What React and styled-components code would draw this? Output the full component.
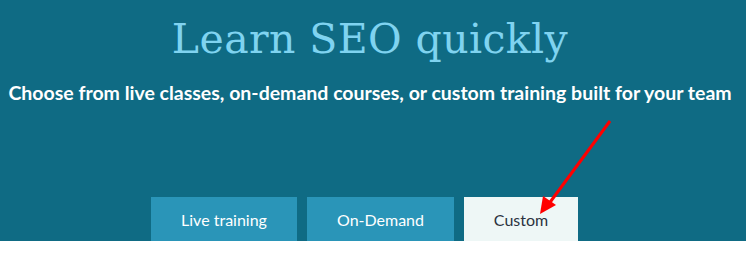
import React from "react";
import styled, { createGlobalStyle } from "styled-components";

const Global = createGlobalStyle`
  body {
    margin: 0;
    background: #ffffff;
  }
`;

const Banner = styled.section`
    position: relative;
    background: #0f6b84;
    height: 241px;
    padding-right: 6px;
    display: flex;
    flex-direction: column;
    align-items: center;
  `,
  Title = styled.h1`
    margin: 10px 0 0;
    font-family: "DejaVu Serif", "Liberation Serif", serif;
    font-weight: 200;
    font-size: 41px;
    line-height: 58px;
    color: #7fd3f0;
    letter-spacing: 0.4px;
  `,
  Subtitle = styled.p`
    margin: 13px 0 0;
    font-family: Lato, "Liberation Sans", sans-serif;
    font-weight: 700;
    font-size: 19.5px;
    line-height: 24px;
    color: #ffffff;
  `,
  Tabs = styled.nav`
    margin-top: auto;
    margin-right: 11px;
    display: flex;
    gap: 10px;
  `,
  Tab = styled.button`
    width: ${(p) => p.$w}px;
    height: 44px;
    border: 0;
    padding: 0;
    font-family: Lato, "Liberation Sans", sans-serif;
    font-size: 16px;
    background: ${(p) => (p.$active ? "#eef7f6" : "#2a95b8")};
    color: ${(p) => (p.$active ? "#2b3340" : "#ffffff")};
  `,
  Arrow = styled.svg`
    position: absolute;
    left: 0;
    top: 0;
    pointer-events: none;
  `;

export default function App() {
  return (
    <>
      <Global />
      <Banner>
        <Title>Learn SEO quickly</Title>
        <Subtitle>
          Choose from live classes, on-demand courses, or custom training built for your team
        </Subtitle>
        <Tabs>
          <Tab $w={146}>Live training</Tab>
          <Tab $w={147}>On-Demand</Tab>
          <Tab $w={114} $active>
            Custom
          </Tab>
        </Tabs>
        <Arrow width="746" height="256">
          <line x1="610" y1="121" x2="548" y2="205" stroke="#ff0000" strokeWidth="3" />
          <polygon points="540,214 543,196 556,205" fill="#ff0000" />
        </Arrow>
      </Banner>
    </>
  );
}
